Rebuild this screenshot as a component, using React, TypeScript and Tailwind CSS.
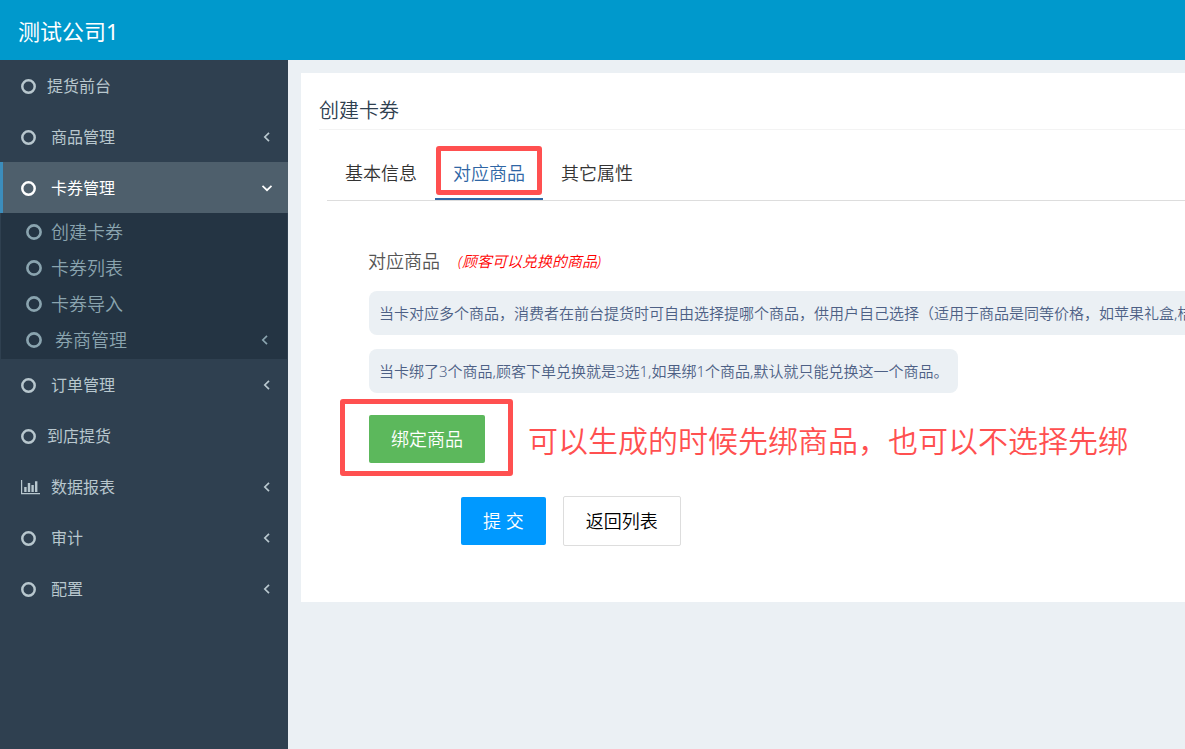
type MenuItem = {
    label: string;
    chart?: boolean;
    arrow?: boolean;
    active?: boolean;
    children?: MenuItem[];
};

const menu: MenuItem[] = [
    { label: "提货前台" },
    { label: "商品管理", arrow: true },
    {
        label: "卡券管理",
        arrow: true,
        active: true,
        children: [
            { label: "创建卡券" },
            { label: "卡券列表" },
            { label: "卡券导入" },
            { label: "券商管理", arrow: true },
        ],
    },
    { label: "订单管理", arrow: true },
    { label: "到店提货" },
    { label: "数据报表", arrow: true, chart: true },
    { label: "审计", arrow: true },
    { label: "配置", arrow: true },
];

const tabs = ["基本信息", "对应商品", "其它属性"];

function RingIcon({ className }: { className: string }) {
    return (
        <svg viewBox="0 0 14 14" className={className} fill="none" stroke="currentColor" strokeWidth="2.3">
            <circle cx="7" cy="7" r="5.8" />
        </svg>
    );
}

function ChartIcon() {
    return (
        <svg viewBox="0 0 19 15" className="h-[15px] w-[19px]" fill="currentColor">
            <path d="M0 0h1.2v13H19v1.2H0zM3.2 7h2.4v5H3.2zM6.8 3h2.4v9H6.8zM10.4 5h2.4v7h-2.4zM14 1.2h2.4V12H14z" />
        </svg>
    );
}

function Arrow({ open }: { open?: boolean }) {
    return (
        <svg
            viewBox="0 0 12 12"
            className="ml-auto size-3"
            fill="none"
            stroke="currentColor"
            strokeWidth="1.7"
        >
            <path d={open ? "M1.5 3.8 6 8.2l4.5-4.4" : "M8 1.8 3.8 6 8 10.2"} />
        </svg>
    );
}

function Sidebar() {
    return (
        <nav className="w-72 shrink-0 bg-[#2f4050] text-[#b8c7ce]">
            <ul>
                {menu.map((item) => (
                    <li key={item.label}>
                        <a
                            href="#"
                            className={`flex h-[51px] items-center border-l-3 pt-px pr-[15px] pl-[18px] text-base font-normal ${
                                item.active
                                    ? "border-[#3c8dbc] bg-[#4e5f6c] text-white"
                                    : "border-transparent"
                            }`}
                        >
                            <span className={item.arrow ? "w-[30px]" : "w-[26px]"}>
                                {item.chart ? <ChartIcon /> : <RingIcon className="size-[15px]" />}
                            </span>
                            {item.label}
                            {item.arrow && <Arrow open={item.active} />}
                        </a>
                        {item.children && (
                            <ul className="mx-px bg-[#243443] py-px text-[#8aa4af]">
                                {item.children.map((child) => (
                                    <li key={child.label}>
                                        <a
                                            href="#"
                                            className="flex h-9 items-center pr-4 pl-[25px] text-lg"
                                        >
                                            <RingIcon
                                                className={child.arrow ? "mr-[13px] size-4" : "mr-[9px] size-4"}
                                            />
                                            {child.label}
                                            {child.arrow && <Arrow />}
                                        </a>
                                    </li>
                                ))}
                            </ul>
                        )}
                    </li>
                ))}
            </ul>
        </nav>
    );
}

function Tabs() {
    return (
        <div role="tablist" className="mt-[18px] ml-2 flex border-b border-[#ddd]">
            {tabs.map((tab, i) => (
                <button
                    key={tab}
                    type="button"
                    role="tab"
                    aria-selected={i === 1}
                    className={`relative h-[52px] border-b-2 px-[18px] text-lg ${
                        i === 1 ? "border-[#2f66a5] text-[#2f66a5]" : "border-transparent text-[#333]"
                    }`}
                >
                    {tab}
                    {i === 1 && (
                        <span className="absolute -top-0.5 right-px bottom-[3px] left-px rounded-[3px] border-5 border-[#ff5050]" />
                    )}
                </button>
            ))}
        </div>
    );
}

export default function App() {
    return (
        <div className="flex min-h-screen flex-col overflow-hidden bg-[#ebf0f4] font-['Noto_Sans','Noto_Sans_CJK_SC',sans-serif] font-[350] whitespace-nowrap">
            <header className="flex h-15 items-center bg-[#0099cc] px-[18px] pt-0.5 text-[22px] font-normal text-white">
                测试公司1
            </header>
            <div className="flex flex-1 items-stretch">
                <Sidebar />
                <main className="min-w-0 flex-1 overflow-hidden pt-[13px] pl-[13px]">
                    <section className="bg-white pt-[18px] pb-14 pl-[18px]">
                        <h1 className="h-[39px] border-b border-[#f3f3f3] text-xl leading-10 text-[#2f4050]">
                            创建卡券
                        </h1>
                        <Tabs />
                        <div className="pt-11 pl-[50px]">
                            <div className="-ml-px flex h-8 items-center gap-[18px]">
                                <span className="text-lg text-[#555]">对应商品</span>
                                <em className="text-[15px] text-[#f00]">(顾客可以兑换的商品)</em>
                            </div>
                            <div className="mt-3.5 flex flex-col items-start gap-3.5 text-[15px] text-[#4d6085]">
                                <p className="h-11 rounded-lg bg-[#ebf0f4] px-2.5 leading-11">
                                    当卡对应多个商品，消费者在前台提货时可自由选择提哪个商品，供用户自己选择（适用于商品是同等价格，如苹果礼盒,桔
                                </p>
                                <p className="h-11 rounded-lg bg-[#ebf0f4] px-2.5 leading-11">
                                    当卡绑了3个商品,顾客下单兑换就是3选1,如果绑1个商品,默认就只能兑换这一个商品。
                                </p>
                            </div>
                            <div className="mt-[22px] flex items-center gap-[43px]">
                                <div className="relative">
                                    <button
                                        type="button"
                                        className="h-12 rounded-xs bg-[#5cb85c] px-[22px] text-lg text-white"
                                    >
                                        绑定商品
                                    </button>
                                    <span className="pointer-events-none absolute -top-4 -right-7 -bottom-[13px] -left-[29px] rounded-[3px] border-5 border-[#ff5050]" />
                                </div>
                                <span className="pt-1 text-3xl text-[#ff5050]">
                                    可以生成的时候先绑商品，也可以不选择先绑
                                </span>
                            </div>
                            <div className="mt-[33px] ml-23 flex items-center gap-[17px] text-lg">
                                <button
                                    type="button"
                                    className="h-12 rounded-xs bg-[#0099ff] px-[22px] text-white"
                                >
                                    提 交
                                </button>
                                <button
                                    type="button"
                                    className="h-[50px] rounded-xs border border-[#ddd] bg-white px-[22px] text-black"
                                >
                                    返回列表
                                </button>
                            </div>
                        </div>
                    </section>
                </main>
            </div>
        </div>
    );
}
